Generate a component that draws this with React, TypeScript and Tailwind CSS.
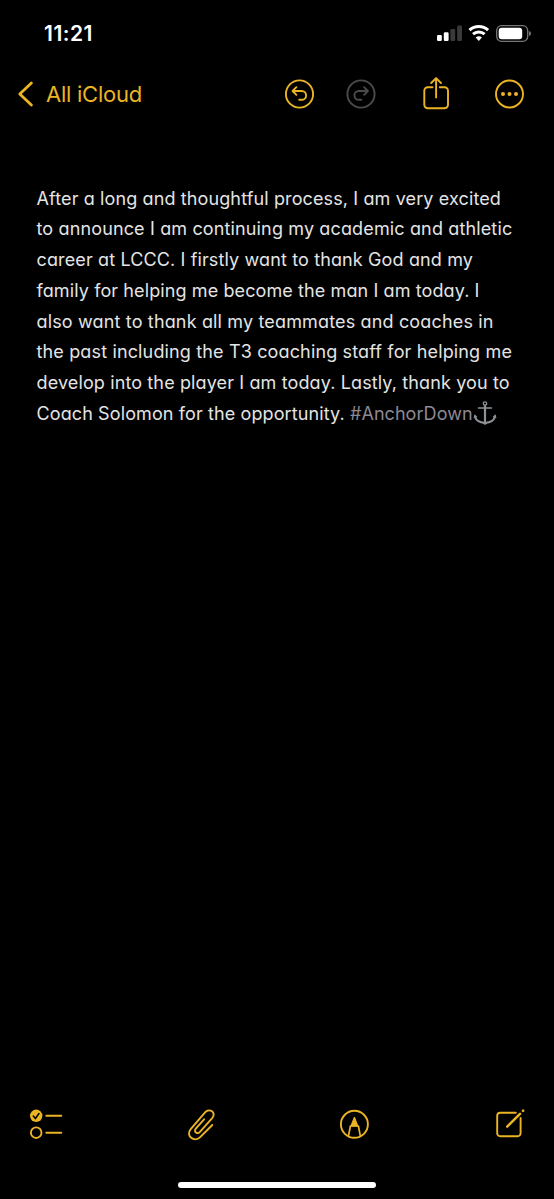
import React from 'react';

const noteLines = [
  { text: 'After a long and thoughtful process, I am very excited', spacing: 'tracking-[0.12px]' },
  { text: 'to announce I am continuing my academic and athletic', spacing: 'tracking-[0.14px]' },
  { text: 'career at LCCC. I firstly want to thank God and my', spacing: 'tracking-[0.13px]' },
  { text: 'family for helping me become the man I am today. I', spacing: 'tracking-[0.105px]' },
  { text: 'also want to thank all my teammates and coaches in', spacing: 'tracking-[0.155px]' },
  { text: 'the past including the T3 coaching staff for helping me', spacing: 'tracking-[0.145px]' },
  { text: 'develop into the player I am today. Lastly, thank you to', spacing: 'tracking-[0.125px]' },
];

const StatusBar: React.FC = () => (
  <div className="flex h-[66px] items-center justify-between pl-11 pr-[23px]">
    <span className="pt-[2px] text-[21px] font-semibold leading-6 tracking-[0.5px] text-white">11:21</span>
    <svg width="94" height="20" viewBox="0 0 94 20" fill="none" aria-hidden="true">
      <rect x="0" y="12" width="4.8" height="6" rx="1.2" fill="#fff" />
      <rect x="6.8" y="9.2" width="4.8" height="8.8" rx="1.2" fill="#fff" />
      <rect x="13.4" y="6" width="4.8" height="12" rx="1.2" fill="#3a3a3a" />
      <rect x="20.2" y="2.5" width="4.8" height="15.5" rx="1.2" fill="#3a3a3a" />
      <path d="M32.5 7.1a13.7 13.7 0 0 1 18.6 0" stroke="#fff" strokeWidth="3" />
      <path d="M36 11.2a8.8 8.8 0 0 1 11.6 0" stroke="#fff" strokeWidth="2.9" />
      <path d="M38.7 14.6a4.6 4.6 0 0 1 6.2 0L41.8 18z" fill="#fff" />
      <rect x="59.7" y="2.7" width="31" height="15.6" rx="4.8" stroke="#757575" strokeWidth="1.3" />
      <rect x="61.7" y="4.7" width="23.5" height="11.6" rx="3" fill="#fff" />
      <path d="M92 8v5c1.3-.5 2-1.4 2-2.5S93.3 8.5 92 8z" fill="#757575" />
    </svg>
  </div>
);

const Header: React.FC = () => (
  <header className="flex h-14 items-center pl-[17px] text-[#ebb424]">
    <svg width="18" height="28" viewBox="0 0 18 28" fill="none" stroke="currentColor" aria-hidden="true">
      <path d="M14.4 3L2.800 14l11.600 11" strokeWidth="2.8" strokeLinecap="round" strokeLinejoin="round" />
    </svg>
    <span className="ml-[11px] w-[238px] whitespace-nowrap pb-px text-[22px] leading-7 tracking-[-0.25px]">All iCloud</span>
    <svg width="32" height="32" viewBox="0 0 32 32" fill="none" stroke="currentColor" strokeWidth="1.9" strokeLinecap="round" strokeLinejoin="round" aria-hidden="true">
      <circle cx="15.5" cy="16" r="13.6" />
      <path d="M12.4 9.200L8.600 13l3.800 3.800M8.900 13h8.800a4.400 4.400 0 0 1 0 8.800h-2.500" />
    </svg>
    <svg className="ml-[29px] text-[#4b4b4d]" width="32" height="32" viewBox="0 0 32 32" fill="none" stroke="currentColor" strokeWidth="1.9" strokeLinecap="round" strokeLinejoin="round" aria-hidden="true">
      <circle cx="16" cy="16" r="13.6" />
      <path d="M19.100 9.200l3.800 3.800-3.800 3.800M22.600 13h-8.800a4.400 4.400 0 0 0 0 8.800h2.500" />
    </svg>
    <svg className="ml-[43px]" width="32" height="36" viewBox="0 0 32 36" fill="none" stroke="currentColor" strokeWidth="1.9" strokeLinecap="round" strokeLinejoin="round" aria-hidden="true">
      <path d="M12.5 11.2H7.800a3.500 3.500 0 0 0-3.500 3.500v14.100a3.500 3.500 0 0 0 3.500 3.500h16.700a3.500 3.500 0 0 0 3.500-3.500V14.700a3.500 3.500 0 0 0-3.500-3.500h-4.700" />
      <path d="M16.1 21.500V2.500M11.200 7l4.900-4.900L21 7" />
    </svg>
    <svg className="ml-[41px]" width="32" height="32" viewBox="0 0 32 32" fill="none" aria-hidden="true">
      <circle cx="16.5" cy="16" r="13.5" stroke="currentColor" strokeWidth="1.9" />
      <circle cx="10" cy="16" r="2" fill="currentColor" />
      <circle cx="16.5" cy="16" r="2" fill="currentColor" />
      <circle cx="23" cy="16" r="2" fill="currentColor" />
    </svg>
  </header>
);

const Anchor: React.FC = () => (
  <svg width="24" height="26" viewBox="0 0 24 26" fill="none" stroke="#8e9296" strokeLinecap="round" aria-hidden="true">
    <circle cx="12" cy="2.500" r="1.700" strokeWidth="1.3" />
    <path d="M12 4.800v17" strokeWidth="2.200" />
    <path d="M5.500 7h13" strokeWidth="1.5" />
    <path d="M2 15.500c1 4 4.500 6 10 6.400 5.500-.4 9-2.400 10-6.400" strokeWidth="2" />
    <path d="M1.200 16.800l.6-2.500 1.800 1.500M22.800 16.800l-.6-2.500-1.800 1.500M10.500 22.200L12 23.400l1.500-1.200" strokeWidth="1.1" />
  </svg>
);

const Toolbar: React.FC = () => (
  <footer className="flex h-10 items-center pl-7 text-[#ebb424]">
    <svg width="36" height="36" viewBox="0 0 36 36" fill="none" stroke="currentColor" strokeWidth="1.9" strokeLinecap="round" aria-hidden="true">
      <circle cx="8.2" cy="9.8" r="6.2" fill="currentColor" stroke="none" />
      <path d="M5.300 10.100l2.100 2.400 3.600-5" stroke="#000" strokeWidth="1.5" />
      <path d="M18.300 9.800h15M18.300 26.700h15" />
      <circle cx="8.2" cy="26.7" r="5.3" />
    </svg>
    <svg className="ml-[120px]" width="36" height="36" viewBox="0 0 36 36" fill="none" stroke="currentColor" strokeWidth="1.9" strokeLinecap="round" strokeLinejoin="round" aria-hidden="true">
      <path d="M28.300 19L16.200 31.200c-5.800 5.600-15-1.300-9.500-8.100L21.300 6.200c4.200-4.700 11.300.6 7.100 5.600L15.900 25.900c-2.600 2.800-6.600-.2-4.100-3.300l8.300-9.300" />
    </svg>
    <svg className="ml-[117px]" width="36" height="36" viewBox="0 0 36 36" fill="none" stroke="currentColor" strokeWidth="1.9" strokeLinejoin="round" aria-hidden="true">
      <circle cx="17.4" cy="18.3" r="13.5" />
      <path d="M11.500 29.800l1.900-9.800h8l1.900 9.800" strokeWidth="1.7" />
      <path d="M17.400 11l3.500 9h-7z" fill="currentColor" strokeWidth="1" />
    </svg>
    <svg className="ml-[120px]" width="36" height="36" viewBox="0 0 36 36" fill="none" stroke="currentColor" strokeWidth="1.9" strokeLinecap="round" strokeLinejoin="round" aria-hidden="true">
      <path d="M22.800 6.800H7.200a3 3 0 0 0-3 3v17.400a3 3 0 0 0 3 3h17.400a3 3 0 0 0 3-3V12" />
      <path d="M14.200 20.600L27 7.800" strokeWidth="2.5" />
      <path d="M30 4.900l.1-.1" strokeWidth="2.7" />
    </svg>
  </footer>
);

export default function App() {
  return (
    <div className="flex h-[1199px] w-[554px] flex-col overflow-hidden bg-black font-[Inter,sans-serif]">
      <StatusBar />
      <Header />
      <main className="flex-1 whitespace-nowrap pl-[36.5px] pt-[61.5px] text-[18px] leading-[30.75px] text-[#e4e4e4] [font-feature-settings:'cv11']">
        {noteLines.map((line) => (
          <p key={line.text} className={line.spacing}>{line.text}</p>
        ))}
        <p className="flex items-center tracking-[0.11px]">
          <span className="whitespace-pre">Coach Solomon for the opportunity. </span>
          <span className="tracking-[0.06px] text-[#8d8994]">#AnchorDown</span>
          <Anchor />
        </p>
      </main>
      <Toolbar />
      <div className="flex h-[55px] shrink-0 justify-center pt-[38px]">
        <div className="h-[6px] w-[198px] rounded-full bg-white" />
      </div>
    </div>
  );
}
